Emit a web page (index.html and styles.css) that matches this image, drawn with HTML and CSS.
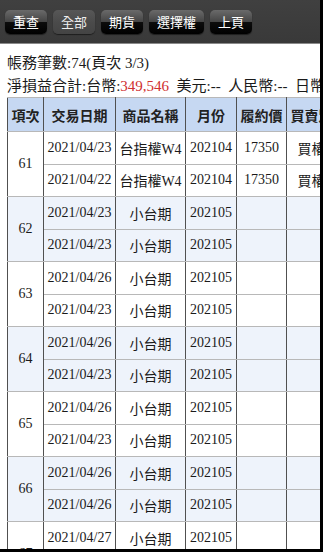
FILE: index.html
```html
<!DOCTYPE html>
<html>
<head>
<meta charset="utf-8">
<link rel="stylesheet" href="styles.css">
</head>
<body>
<div class="frame">
  <div class="toolbar">
    <span class="btn">重查</span>
    <span class="btn btn-alt">全部</span>
    <span class="btn">期貨</span>
    <span class="btn">選擇權</span>
    <span class="btn">上頁</span>
  </div>
  <div class="content">
    <div class="summary">
      <div class="line">帳務筆數:74(頁次 3/3)</div>
      <div class="line">淨損益合計:台幣:<span class="red">349,546</span>&nbsp; 美元:--&nbsp; 人民幣:--&nbsp; 日幣:--</div>
    </div>
    <table class="grid">
      <colgroup>
        <col class="c1"><col class="c2"><col class="c3"><col class="c4"><col class="c5"><col class="c6"><col class="c7"><col class="c8">
      </colgroup>
      <thead>
        <tr><th>項次</th><th>交易日期</th><th>商品名稱</th><th>月份</th><th>履約價</th><th>買賣別</th><th>口數</th><th>損益</th></tr>
      </thead>
      <tbody>
        <tr><td rowspan="2" class="idx">61</td><td>2021/04/23</td><td>台指權W4</td><td>202104</td><td>17350</td><td>買權</td><td>1</td><td></td></tr>
        <tr><td>2021/04/22</td><td>台指權W4</td><td>202104</td><td>17350</td><td>買權</td><td>1</td><td></td></tr>
        <tr class="alt"><td rowspan="2" class="idx">62</td><td>2021/04/23</td><td>小台期</td><td>202105</td><td></td><td></td><td>1</td><td></td></tr>
        <tr class="alt"><td>2021/04/23</td><td>小台期</td><td>202105</td><td></td><td></td><td>1</td><td></td></tr>
        <tr><td rowspan="2" class="idx">63</td><td>2021/04/26</td><td>小台期</td><td>202105</td><td></td><td></td><td>1</td><td></td></tr>
        <tr><td>2021/04/23</td><td>小台期</td><td>202105</td><td></td><td></td><td>1</td><td></td></tr>
        <tr class="alt"><td rowspan="2" class="idx">64</td><td>2021/04/26</td><td>小台期</td><td>202105</td><td></td><td></td><td>1</td><td></td></tr>
        <tr class="alt"><td>2021/04/23</td><td>小台期</td><td>202105</td><td></td><td></td><td>1</td><td></td></tr>
        <tr><td rowspan="2" class="idx">65</td><td>2021/04/26</td><td>小台期</td><td>202105</td><td></td><td></td><td>1</td><td></td></tr>
        <tr><td>2021/04/23</td><td>小台期</td><td>202105</td><td></td><td></td><td>1</td><td></td></tr>
        <tr class="alt"><td rowspan="2" class="idx">66</td><td>2021/04/26</td><td>小台期</td><td>202105</td><td></td><td></td><td>1</td><td></td></tr>
        <tr class="alt"><td>2021/04/26</td><td>小台期</td><td>202105</td><td></td><td></td><td>1</td><td></td></tr>
        <tr><td rowspan="2" class="idx">67</td><td>2021/04/27</td><td>小台期</td><td>202105</td><td></td><td></td><td>1</td><td></td></tr>
        <tr><td>2021/04/26</td><td>小台期</td><td>202105</td><td></td><td></td><td>1</td><td></td></tr>
      </tbody>
    </table>
  </div>
</div>
</body>
</html>
```

FILE: styles.css
```css
html, body {
  margin: 0;
  padding: 0;
  background: #000;
}
.frame {
  width: 320px;
  height: 549px;
  overflow: hidden;
  background: #fff;
  font-family: "Liberation Serif", "Noto Sans CJK TC", serif;
  color: #1a1a1a;
}
.toolbar {
  height: 44px;
  box-sizing: border-box;
  background: linear-gradient(#404040, #393939);
  border-bottom: 1px solid #8a8a8a;
  display: flex;
  align-items: center;
  gap: 6px;
  padding: 0 0 0 5px;
  white-space: nowrap;
}
.btn {
  height: 24px;
  line-height: 24px;
  padding: 0 8px;
  border-radius: 5px;
  font-family: "Noto Sans CJK TC", sans-serif;
  font-size: 13px;
  color: #fff;
  background: linear-gradient(#6a6a6a 0%, #464646 48%, #0c0c0c 52%, #000 100%);
  box-shadow: 0 1px 1px rgba(0,0,0,0.5);
}
.btn-alt {
  background: linear-gradient(#575757 0%, #4b4b4b 50%, #444 100%);
  color: #eee;
}
.content {
  padding: 8px 0 0 7px;
}
.summary {
  font-size: 15px;
  line-height: 22.5px;
  white-space: nowrap;
}
.red {
  color: #d03030;
}
.grid {
  border-collapse: collapse;
  table-layout: fixed;
  width: 459px;
  font-size: 14px;
}
.c1 { width: 36px; }
.c2 { width: 72px; }
.c3 { width: 70px; }
.c4 { width: 51px; }
.c5 { width: 50px; }
.c6 { width: 50px; }
.c7 { width: 50px; }
.c8 { width: 80px; }
.grid th, .grid td {
  border-left: 1px solid #505050;
  border-right: 1px solid #505050;
  border-top: 1px solid #b8b8b8;
  border-bottom: 1px solid #b8b8b8;
  padding: 0;
  text-align: center;
  white-space: nowrap;
  overflow: hidden;
}
.grid th {
  height: 33px;
  background: #c6d8f2;
  font-family: "Noto Sans CJK TC", sans-serif;
  font-weight: bold;
  font-size: 14px;
  color: #222;
}
.grid tbody tr {
  height: 32.5px;
}
.grid tr.alt td {
  background: #eef3fb;
}
```
